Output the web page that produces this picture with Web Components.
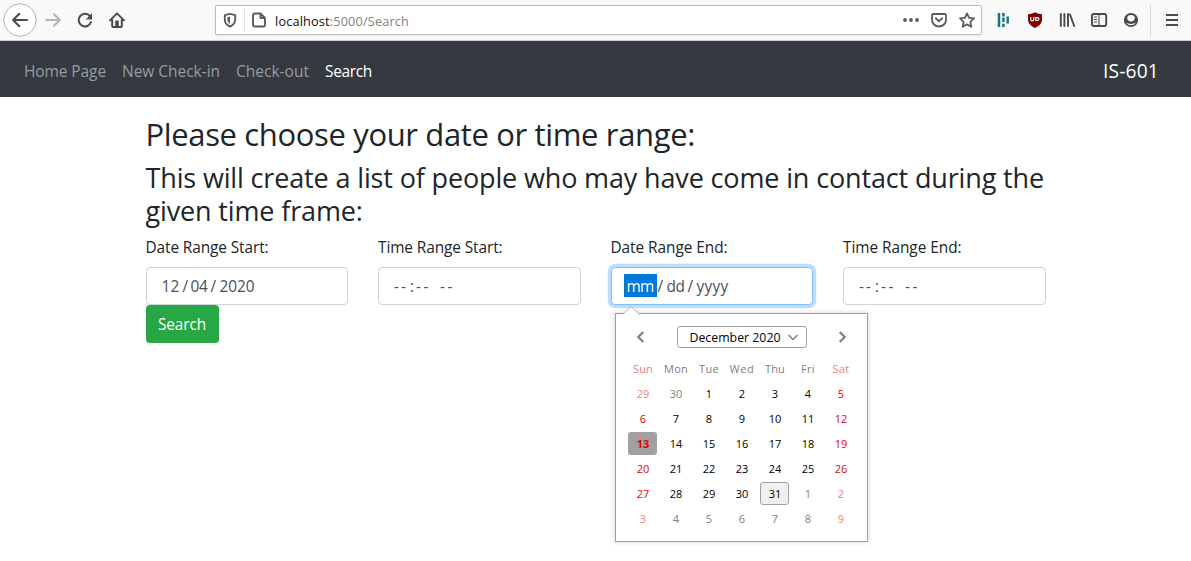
<!DOCTYPE html>
<html lang="en">
<head>
<meta charset="utf-8">
<title>Search</title>
<style>
html,body{margin:0;height:100%;background:#fff;overflow:hidden}
body{font-family:"Open Sans","Noto Sans",sans-serif;color:#212529}
</style>
</head>
<body>
<search-app></search-app>
<script>
const define = (name, html, setup) => customElements.define(name, class extends HTMLElement {
  constructor(){ super(); this.attachShadow({mode:'open'}); }
  connectedCallback(){
    this.shadowRoot.innerHTML = typeof html === 'function' ? html(this) : html;
    if (setup) setup(this);
  }
});

/* Text run whose tracking is tuned so that its longest line occupies a given width. */
define('fit-text', `<style>:host{display:inline-block;white-space:pre}</style><slot></slot>`, el => {
  el.style.letterSpacing = '0px';
  const natural = el.getBoundingClientRect().width;
  const count = Math.max(...el.textContent.split('\n').map(l => l.length));
  if (natural) el.style.letterSpacing = ((+el.getAttribute('w') - natural) / count).toFixed(4) + 'px';
});

const icons = {
  back:`<circle cx="16" cy="16" r="16.2" fill="#fff" stroke="#b5b5b5"/><path d="M23 16H9.5M15.3 9.8 9.1 16l6.2 6.2" stroke="#4a4a4a" stroke-width="2" stroke-linecap="round" stroke-linejoin="round"/>`,
  forward:`<path d="M1 8h13.4M9 2.2 14.8 8 9 13.8" stroke="#b4b4b4" stroke-width="2" stroke-linecap="round" stroke-linejoin="round"/>`,
  reload:`<path d="M13 4.3A6.3 6.3 0 1 0 14 10" stroke="#4a4a4a" stroke-width="2" stroke-linecap="round"/><path d="M15 1v6.5H8.8z" fill="#4a4a4a"/>`,
  home:`<path d="M1 8.4 8 1.4l7 7M3.2 8v6.1q0 .9.9.9h7.8q.9 0 .9-.9V8" stroke="#4a4a4a" stroke-width="2" stroke-linecap="round" stroke-linejoin="round"/><path d="M6.3 15V9.3q0-.8.8-.8h1.8q.8 0 .8.8V15z" fill="#4a4a4a"/>`,
  shield:`<path d="M8 1.900 13.200 3.200V7.500C13.200 11 10.900 13.300 8 14.500 5.100 13.300 2.800 11 2.800 7.500V3.200z" stroke="#5c5c5c" stroke-width="1.9" stroke-linejoin="round"/><path d="M8 4.600V11.900C6.300 10.900 5.400 9.500 5.400 7.500V5.200z" fill="#5c5c5c"/>`,
  page:`<path d="M9.500 1.500H3.800Q2 1.500 2 3.300v9.400q0 1.800 1.800 1.800h8.400q1.800 0 1.800-1.800V6zM9.500 1.500V6H14" stroke="#5c5c5c" stroke-width="1.900" stroke-linejoin="round"/>`,
  dots:`<g fill="#5c5c5c"><circle cx="2" cy="8" r="1.9"/><circle cx="8" cy="8" r="1.9"/><circle cx="14" cy="8" r="1.9"/></g>`,
  pocket:`<path d="M2.200 2h11.600q1.200 0 1.200 1.200v4.500a7 6.800 0 0 1-14 0V3.200Q1 2 2.200 2z" stroke="#5c5c5c" stroke-width="1.800"/><path d="m4.800 6.300 3.200 3 3.200-3" stroke="#5c5c5c" stroke-width="1.900" stroke-linecap="round" stroke-linejoin="round"/>`,
  star:`<path d="m8 1.300 2.100 4.500 4.900.6-3.600 3.400.9 5L8 12.400l-4.300 2.400.9-5L1 6.400l4.900-.6z" stroke="#5c5c5c" stroke-width="1.800" stroke-linejoin="round"/>`,
  bars:`<g stroke="#187384" stroke-width="2.500"><path d="M4 1v14M12.700 4.600v7"/><path d="M8.400 1v3.400M8.400 5.400v4.600M8.400 11.700v3.300" /></g>`,
  ublock:`<path d="M8 .2c1.800 1.100 4 1.900 7 2v5.300c0 4.100-3 6.500-7 8.400-4-1.900-7-4.300-7-8.400V2.200c3-.1 5.200-.9 7-2z" fill="#800000"/><path d="M3.700 5v2.400q0 1.500 1.500 1.500t1.500-1.500V5M8.800 5.600v2.900h1.600a1.450 1.450 0 0 0 0-2.900z" stroke="#fff" stroke-width="1.200"/>`,
  library:`<path d="M1.800 2v12M5.400 2v12M9 2v12M11 2.500l4.200 11.500" stroke="#4a4a4a" stroke-width="1.900" stroke-linecap="round"/>`,
  sidebar:`<rect x="1" y="2" width="14.200" height="12" rx="1.700" stroke="#4a4a4a" stroke-width="1.900"/><path d="M8 2v12M3 5h3M3 7.500h3M3 10h3" stroke="#4a4a4a" stroke-width="1.100"/>`,
  account:`<circle cx="8" cy="8" r="7.100" fill="#4a4a4a"/><path d="M4.200 6.200a3.800 3.300 0 0 1 7.600 0c0 1.800-1.700 3.200-3.800 3.200S4.200 8 4.200 6.200z" fill="#f9f9fa"/><path d="M3.300 10.900c1.600.1 2.700 1 4.700 1s3.100-.9 4.700-1A5.400 5.400 0 0 1 8 13.300a5.400 5.400 0 0 1-4.700-2.400z" fill="#f9f9fa"/>`,
  menu:`<path d="M2 3h12M2 8h12M2 13h12" stroke="#4a4a4a" stroke-width="2"/>`,
  prev:`<path d="m11.300 3-5 5 5 5" stroke="#808080" stroke-width="2.200"/>`,
  next:`<path d="m5.700 3 5 5-5 5" stroke="#808080" stroke-width="2.200"/>`,
  down:`<path d="m3.500 6 4.500 4.500L12.500 6" stroke="#808080" stroke-width="1.500"/>`
};
define('ui-icon', el => {
  const s = el.getAttribute('size') || 16, n = el.getAttribute('name');
  return `<style>:host{display:block;flex:none;width:${s}px;height:${s}px}svg{display:block;overflow:visible}</style>
  <svg width="${s}" height="${s}" viewBox="0 0 ${s} ${s}" fill="none">${icons[n]}</svg>`;
});

define('browser-bar', `<style>
:host{display:flex;box-sizing:border-box;height:41px;background:#f9f9fa;border-bottom:1px solid #d0d0d1;align-items:center;padding-left:4px}
.url{display:flex;box-sizing:border-box;width:767px;height:30px;margin-left:90px;background:#fff;border:1px solid #bdbdbe;border-radius:2px;box-shadow:0 1px 3px rgba(0,0,0,.07);align-items:center;padding-left:6px}
.sep{width:1px;height:22px;background:#e0e0e0;margin:0 6px 0 6px}
.addr{margin-left:8px;font-size:12.700px;line-height:20px;color:#808080;width:628px;padding-top:2px}.addr b{font-weight:400;color:#0c0c0d}
.i2{margin-left:16px}
.vr{width:1px;height:33px;background:#d8d8d8;margin:0 13px 0 11px}
</style>
<ui-icon name="back" size="32"></ui-icon><ui-icon name="forward" style="margin-left:9px"></ui-icon><ui-icon name="reload" class="i2"></ui-icon><ui-icon name="home" class="i2"></ui-icon>
<div class="url"><ui-icon name="shield"></ui-icon><div class="sep"></div><ui-icon name="page"></ui-icon>
<div class="addr"><fit-text w="134"><b>localhost</b>:5000/Search</fit-text></div>
<ui-icon name="dots"></ui-icon><ui-icon name="pocket" style="margin-left:12px"></ui-icon><ui-icon name="star" style="margin-left:12px"></ui-icon></div>
<ui-icon name="bars" style="margin-left:13px"></ui-icon><ui-icon name="ublock" class="i2"></ui-icon><ui-icon name="library" class="i2"></ui-icon><ui-icon name="sidebar" class="i2"></ui-icon><ui-icon name="account" class="i2"></ui-icon>
<div class="vr"></div><ui-icon name="menu"></ui-icon>`);

define('site-nav', `<style>
:host{display:flex;box-sizing:border-box;height:56px;background:#343a40;align-items:center;padding:3px 32px 0 24px;font-size:15.500px;color:#999c9f;gap:16px;line-height:24px}
.on{color:#fff}.brand{margin-left:auto;color:#fff;font-size:19.200px;line-height:30px}
</style><fit-text w="82">Home Page</fit-text><fit-text w="98">New Check-in</fit-text><fit-text w="73">Check-out</fit-text><fit-text class="on" w="47">Search</fit-text><fit-text class="brand" w="56">IS-601</fit-text>`);

define('form-field', el => `<style>
:host{display:block;width:202.500px;font-size:15.400px;line-height:24px}
label{display:block;box-sizing:border-box;height:24px;padding-top:1px;margin-bottom:8px;color:#212529}
.box{box-sizing:border-box;height:38px;border:1px solid #ced4da;border-radius:4px;padding:6px 12px;color:#495057;display:flex;align-items:center;background:#fff}
:host([focused]) .box{border-color:#80bdff;box-shadow:0 0 0 3.200px rgba(0,123,255,.25)}
</style><label><fit-text w="${el.getAttribute('w')}">${el.getAttribute('label')}</fit-text></label><div class="box"><slot></slot></div>`);

define('date-value', el => {
  const f = (el.getAttribute('parts')||'').split('|').map(p => p.split(','));
  return `<style>:host{display:flex;line-height:25px;height:23px}span{box-sizing:border-box;display:block;white-space:pre}.sel{background:#0078d7;color:#fff;height:23px}</style>` +
  f.map(([t,x,w,c]) => `<span class="${c||''}" style="width:${w}px;padding-left:${x}px"><fit-text w="${w - x - (c?3:1)}">${t}</fit-text></span>`).join('');
});

define('month-calendar', () => {
  const heads = ['Sun','Mon','Tue','Wed','Thu','Fri','Sat'];
  let cells = heads.map((d,i)=>`<div class="h ${i%6?'dim':'wdim'}"><fit-text w="${[20,24,20,25,20,14,17][i]}">${d}</fit-text></div>`).join('');
  for (let i=0;i<42;i++){
    const n = i-1, day = n<1 ? 29+i : n>31 ? n-31 : n;
    const out = n<1||n>31, we = i%7===0||i%7===6;
    cells += `<div class="${out?(we?'wdim':'dim'):(we?'we':'')} ${n===13?'picked':''} ${n===31?'today':''}">${day}</div>`;
  }
  return `<style>
:host{display:block;box-sizing:border-box;width:253px;height:229px;background:#fff;border:1px solid #a0a0a0;box-shadow:0 0 5px rgba(0,0,0,.18);color:#000;padding:12px 12px 0}
.arrow{position:absolute;left:6px;top:-8px}
.top{display:flex;align-items:center;height:22px;padding:0 5px 0 4px;justify-content:space-between}
.month{display:flex;box-sizing:border-box;width:130px;height:22px;border:1px solid #a0a0a0;border-radius:3px;align-items:center;justify-content:space-between;font-size:12.300px;padding:0 5px 0 12px;margin-left:1px}
.month fit-text{padding-top:2px}
.grid{display:grid;grid-template-columns:repeat(7,29px);grid-auto-rows:23px;gap:2px 4px;margin-top:9px}
.grid div{box-sizing:border-box;display:flex;align-items:center;justify-content:center;font-size:11px;line-height:20px;border-radius:3px;border:1px solid transparent;padding:2px 0 0 1px}
.we{color:#e60000}.dim{color:#808080}.wdim{color:#f08080}
.grid .picked{background:#a0a0a0;font-weight:700}.grid .today{background:#f0f0f0;border-color:#a0a0a0}
</style>
<svg class="arrow" width="19" height="9" viewBox="0 0 19 9"><path d="M.5 8.500 9 .5l9 8V9H.5z" fill="#fff"/><path d="M.5 8.500 9 .5l9 8" fill="none" stroke="#b0b0b0"/></svg>
<div class="top"><ui-icon name="prev"></ui-icon><div class="month"><fit-text w="91">December 2020</fit-text><ui-icon name="down"></ui-icon></div><ui-icon name="next"></ui-icon></div>
<div class="grid">${cells}</div>`;
});

define('search-app', `<style>
:host{display:block}
main{box-sizing:border-box;width:900px;margin:0 auto;padding-top:16px}
h1,h2{margin:0 0 8px;font-weight:400}
h1{font-size:31px}h2{font-size:27px}
h1 fit-text,h2 fit-text{display:block;width:max-content}
h1{height:38.400px;line-height:42px}
h2{height:67.200px;line-height:33px;box-sizing:border-box;padding-top:2px}
.row{display:flex;gap:30px}
.end{position:relative}
month-calendar{position:absolute;left:4.500px;top:78.400px;z-index:2}
button{display:block;box-sizing:border-box;border:0;background:#28a745;color:#fff;border-radius:4px;width:73px;height:38px;padding:2px 0 0;font:15.400px/24px "Open Sans","Noto Sans",sans-serif}
</style>
<browser-bar></browser-bar><site-nav></site-nav>
<main>
<h1><fit-text w="549.500">Please choose your date or time range:</fit-text></h1>
<h2><fit-text w="898.500">This will create a list of people who may have come in contact during the
given time frame:</fit-text></h2>
<div class="row">
<form-field label="Date Range Start:" w="123"><date-value parts="12,3,22|/,2,8|04,2,20|/,2,9|2020,2,38"></date-value></form-field>
<form-field label="Time Range Start:" w="124.500"><date-value parts="--,3,18|:,1,6|--,1,17|--,8,24"></date-value></form-field>
<div class="end"><form-field focused label="Date Range End:" w="117"><date-value parts="mm,3,33,sel|/,1,8|dd,2,21|/,2,9|yyyy,2,35"></date-value></form-field><month-calendar></month-calendar></div>
<form-field label="Time Range End:" w="118.500"><date-value parts="--,3,18|:,1,6|--,1,17|--,8,24"></date-value></form-field>
</div>
<button><fit-text w="48">Search</fit-text></button>
</main>`);
</script>
</body>
</html>
